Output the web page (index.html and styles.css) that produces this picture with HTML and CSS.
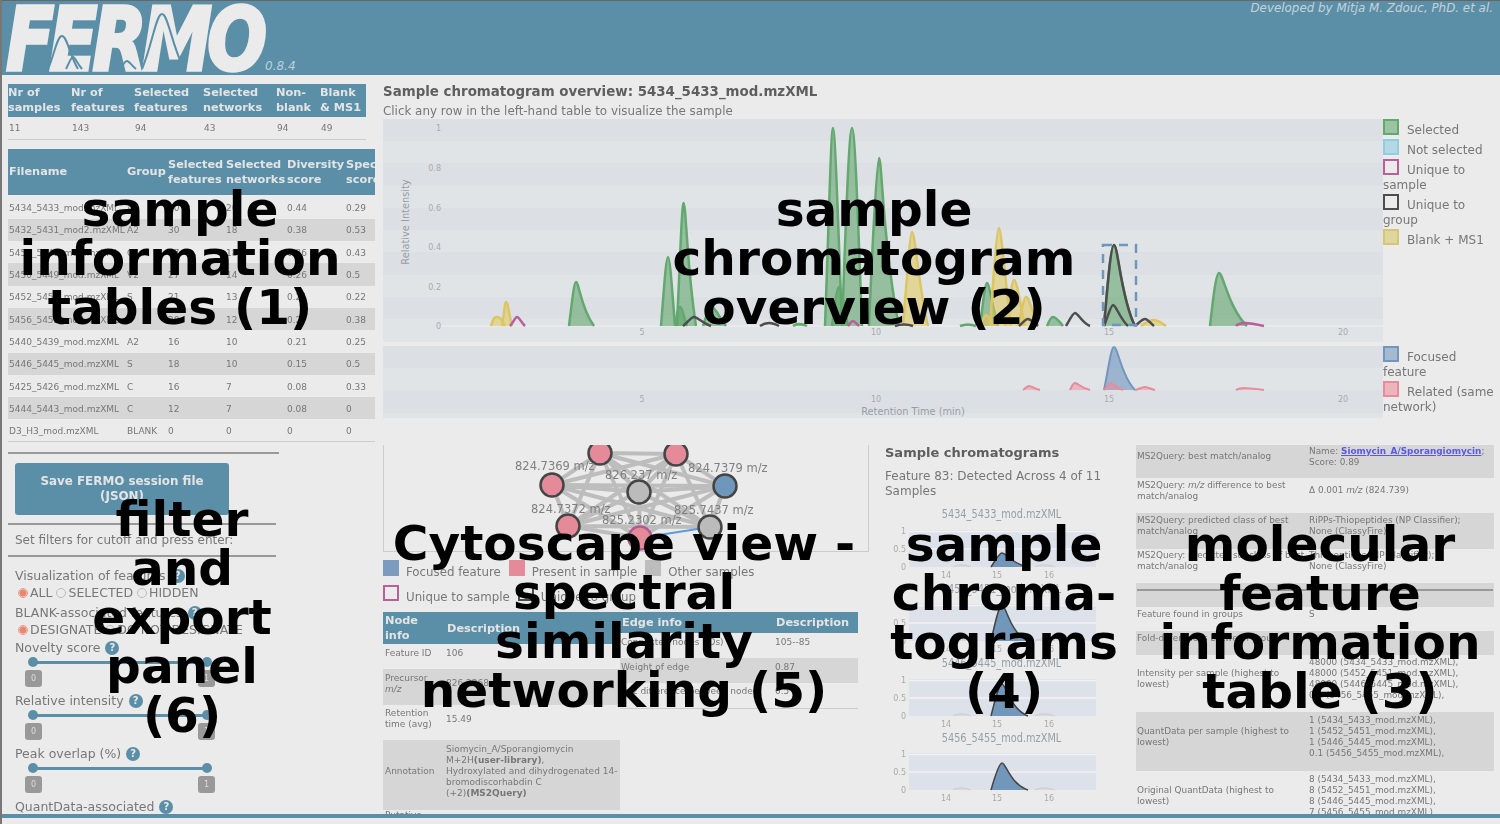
FILE: index.html
```html
<!DOCTYPE html>
<html lang="en">
<head>
  <meta charset="UTF-8">
  <meta name="viewport" content="width=device-width, initial-scale=1.0">
  <title>FERMO dashboard</title>
  <link rel="stylesheet" href="styles.css">
</head>
<body>
  <div class="page">
    <header class="header">
      <div class="logo">
        <span class="logo-text">FERMO</span>
        <svg class="logo-peaks" width="190" height="70" viewBox="0 0 190 70">
          <path d="M46 68C52 55 55 35 60 35C65 35 68 55 76 68"/>
          <path d="M64 68C67 62 69 56 71 56C73 56 75 62 80 68"/>
          <path d="M118 68C121 64 123 60 125 60C127 60 129 64 134 68"/>
          <path d="M140 68C150 45 154 13 160 13C166 13 170 45 182 68"/>
        </svg>
        <span class="version">0.8.4</span>
      </div>
      <div class="credit">Developed by Mitja M. Zdouc, PhD. et al.</div>
    </header>

    <div class="main">
      <aside class="left">
        <table class="tbl tbl-stats">
          <thead>
            <tr><th class="c1">Nr of samples</th><th class="c2">Nr of features</th><th class="c3">Selected features</th><th class="c4">Selected networks</th><th class="c5">Non-blank</th><th class="c6">Blank &amp; MS1</th></tr>
          </thead>
          <tbody>
            <tr><td>11</td><td>143</td><td>94</td><td>43</td><td>94</td><td>49</td></tr>
          </tbody>
        </table>

        <div class="samples-wrap">
          <table class="tbl tbl-samples">
            <thead>
              <tr><th class="s1">Filename</th><th class="s2">Group</th><th class="s3">Selected features</th><th class="s4">Selected networks</th><th class="s5">Diversity score</th><th class="s6">Specificity score</th></tr>
            </thead>
            <tbody>
              <tr><td>5434_5433_mod.mzXML</td><td>A2</td><td>30</td><td>20</td><td>0.44</td><td>0.29</td></tr>
              <tr><td>5432_5431_mod2.mzXML</td><td>A2</td><td>30</td><td>18</td><td>0.38</td><td>0.53</td></tr>
              <tr><td>5450_5449_mod.mzXML</td><td>C</td><td>27</td><td>18</td><td>0.36</td><td>0.43</td></tr>
              <tr><td>5450_5449_mod.mzXML</td><td>V2</td><td>27</td><td>14</td><td>0.26</td><td>0.5</td></tr>
              <tr><td>5452_5451_mod.mzXML</td><td>S</td><td>21</td><td>13</td><td>0.21</td><td>0.22</td></tr>
              <tr><td>5456_5455_mod.mzXML</td><td>S</td><td>20</td><td>12</td><td>0.27</td><td>0.38</td></tr>
              <tr><td>5440_5439_mod.mzXML</td><td>A2</td><td>16</td><td>10</td><td>0.21</td><td>0.25</td></tr>
              <tr><td>5446_5445_mod.mzXML</td><td>S</td><td>18</td><td>10</td><td>0.15</td><td>0.5</td></tr>
              <tr><td>5425_5426_mod.mzXML</td><td>C</td><td>16</td><td>7</td><td>0.08</td><td>0.33</td></tr>
              <tr><td>5444_5443_mod.mzXML</td><td>C</td><td>12</td><td>7</td><td>0.08</td><td>0</td></tr>
              <tr><td>D3_H3_mod.mzXML</td><td>BLANK</td><td>0</td><td>0</td><td>0</td><td>0</td></tr>
            </tbody>
          </table>
        </div>

        <div class="rule rule-first"></div>
        <button class="save-btn">Save FERMO session file (JSON)</button>
        <div class="rule rule-second"></div>
        <p class="filter-intro">Set filters for cutoff and press enter:</p>
        <div class="rule rule-second"></div>

        <div class="filters">
          <div class="flabel flabel-first">Visualization of features <span class="help">?</span></div>
          <div class="radios">
            <span class="radio on"></span>ALL <span class="radio"></span>SELECTED <span class="radio"></span>HIDDEN
          </div>
          <div class="flabel">BLANK-associated features <span class="help">?</span></div>
          <div class="radios">
            <span class="radio on"></span>DESIGNATE <span class="radio"></span>DO NOT DESIGNATE
          </div>
          <div class="flabel flabel-tight">Novelty score <span class="help">?</span></div>
          <div class="slider"><div class="track"></div><div class="vals"><span>0</span><span>1</span></div></div>
          <div class="flabel flabel-tight">Relative intensity <span class="help">?</span></div>
          <div class="slider"><div class="track"></div><div class="vals"><span>0</span><span>1</span></div></div>
          <div class="flabel flabel-tight">Peak overlap (%) <span class="help">?</span></div>
          <div class="slider"><div class="track"></div><div class="vals"><span>0</span><span>1</span></div></div>
          <div class="flabel flabel-tight">QuantData-associated <span class="help">?</span></div>
        </div>
      </aside>

      <section class="right">
        <div class="overview">
          <h2 class="ov-title">Sample chromatogram overview: 5434_5433_mod.mzXML</h2>
          <p class="ov-sub">Click any row in the left-hand table to visualize the sample</p>
          <div class="ov-row ov-row-main">
            <svg class="plot" width="1000" height="223" viewBox="0 0 1000 223">
              <rect width="1000" height="223" fill="#dce0e4"/>
              <g fill="#e0e4e7">
                <rect y="22" width="1000" height="22"/><rect y="67" width="1000" height="22"/><rect y="111" width="1000" height="22"/><rect y="156" width="1000" height="22"/><rect y="200" width="1000" height="23"/>
              </g>
              <line x1="57" y1="207" x2="1000" y2="207" stroke="#eef0f1" stroke-width="1"/>
              <g class="peaks-green">
                <path d="M186 207C189 183 191 163 193 163C196 163 198 190 211 207"/>
                <path d="M278 207C281 170 283 138 285 138C287 138 289 170 292 207"/>
                <path d="M294 207C297 140 299 84 300.5 84C303 84 304 150 313 207"/>
                <path d="M292 207C294 195 295 188 297 188C299 188 301 198 304 207"/>
                <path d="M320 207C324 195 326 188 329 188C332 188 336 198 343 207"/>
                <path d="M410 207C414 204 418 204 424 207"/>
                <path d="M442 207C446 100 448 9 450 9C452 9 455 100 459 207"/>
                <path d="M449 207C452 185 454 168 456 168C458 168 461 185 465 207"/>
                <path d="M459 207C463 100 466 9 469 9C472 9 475 100 479 207"/>
                <path d="M486 207C490 110 494 39 496 39C499 39 500 130 516 207"/>
                <path d="M577 207C582 205 588 205 593 207"/>
                <path d="M597 207C600 185 602 164 604 164C606 164 609 185 615 207"/>
                <path d="M664 207C666 202 668 198 670 198C673 198 676 202 680 207"/>
                <path d="M721 207C725 160 728 126 731 126C735 126 738 180 752 207"/>
                <path d="M827 207C830 180 833 154 836 154C840 154 846 190 864 207"/>
              </g>
              <g class="peaks-yellow">
                <path d="M108 207C110 200 111 198 114 198C117 198 119 200 122 207"/>
                <path d="M119 207C121 195 122 183 123 183C125 183 126 195 129 207"/>
                <path d="M520 207C524 160 527 113 529 113C532 113 536 170 545 207"/>
                <path d="M598 207C600 200 602 196 603 196C605 196 607 200 610 207"/>
                <path d="M607 207C611 150 614 109 616 109C618 109 622 160 628 207"/>
                <path d="M622 207C626 185 629 161 631 161C634 161 637 185 642 207"/>
                <path d="M635 207C638 195 641 178 643 178C646 178 650 195 655 207"/>
                <path d="M758 207C762 204 767 201 771 201C775 201 779 204 783 207"/>
              </g>
              <g class="peaks-pink">
                <path d="M127 207C131 203 132 198 134 198C136 198 138 203 142 207"/>
                <path d="M465 207C467 205 468 202 470 202C472 202 473 205 476 207"/>
                <path d="M853 207C856 203 864 203 881 207"/>
              </g>
              <g class="peaks-dark">
                <path d="M300 207C305 203 308 198 311 198C314 198 320 204 328 207"/>
                <path d="M377 207C380 205 382 204 386 204C390 204 392 205 396 207"/>
                <path d="M636 207C640 204 642 200 645 200C648 200 650 204 655 207"/>
                <path d="M683 207C687 200 690 194 692 194C695 194 699 204 707 207"/>
                <path d="M721 207C725 197 728 186 730 186C733 186 737 200 745 207"/>
                <path d="M721 207C725 160 728 126 731 126C735 126 738 180 752 207"/>
                <path d="M752 207C756 204 759 200 762 200C765 200 767 204 771 207"/>
                <path d="M512 207C518 205 524 205 530 207"/>
              </g>
              <rect class="focus-box" x="720" y="126" width="33" height="80"/>
              <g class="axis">
                <text x="58" y="12" text-anchor="end">1</text>
                <text x="58" y="52" text-anchor="end">0.8</text>
                <text x="58" y="92" text-anchor="end">0.6</text>
                <text x="58" y="131" text-anchor="end">0.4</text>
                <text x="58" y="171" text-anchor="end">0.2</text>
                <text x="58" y="210" text-anchor="end">0</text>
                <text x="259" y="216" text-anchor="middle">5</text>
                <text x="493" y="216" text-anchor="middle">10</text>
                <text x="726" y="216" text-anchor="middle">15</text>
                <text x="960" y="216" text-anchor="middle">20</text>
                <text class="axis-title" transform="translate(26 103) rotate(-90)" text-anchor="middle">Relative Intensity</text>
              </g>
            </svg>
            <ul class="legend">
              <li><span class="swatch sw-green"></span>Selected</li>
              <li><span class="swatch sw-sky"></span>Not selected</li>
              <li><span class="swatch sw-pink"></span>Unique to sample</li>
              <li><span class="swatch sw-dark"></span>Unique to group</li>
              <li><span class="swatch sw-yellow"></span>Blank + MS1</li>
            </ul>
          </div>
          <div class="ov-row ov-row-focus">
            <svg class="plot" width="1000" height="72" viewBox="0 0 1000 72">
              <rect width="1000" height="72" fill="#dce0e4"/>
              <g fill="#e0e4e7"><rect y="22" width="1000" height="22"/><rect y="67" width="1000" height="5"/></g>
              <path class="peak-focus" d="M721 44C725 25 728 1 731 1C735 1 738 30 752 44"/>
              <g class="peaks-related">
                <path d="M640 44C643 42 644 40 646 40C649 40 651 43 657 44"/>
                <path d="M687 44C689 40 690 37 692 37C695 37 698 42 707 44"/>
                <path d="M721 44C724 42 725 37 727 37C730 37 733 42 740 44"/>
                <path d="M752 44C756 43 759 41 762 41C765 41 768 43 772 44"/>
                <path d="M853 44C858 41 866 42 881 44"/>
              </g>
              <g class="axis">
                <text x="259" y="56" text-anchor="middle">5</text>
                <text x="493" y="56" text-anchor="middle">10</text>
                <text x="726" y="56" text-anchor="middle">15</text>
                <text x="960" y="56" text-anchor="middle">20</text>
                <text class="axis-title" x="530" y="69" text-anchor="middle">Retention Time (min)</text>
              </g>
            </svg>
            <ul class="legend">
              <li><span class="swatch sw-focus"></span>Focused feature</li>
              <li><span class="swatch sw-related"></span>Related (same network)</li>
            </ul>
          </div>
        </div>

        <div class="lower">
          <div class="network">
            <div class="cyto">
              <svg width="483" height="106" viewBox="384 446 483 106">
                <g class="edges">
                  <path d="M600 454L676 455M600 454L552 486M600 454L725 487M600 454L639 493M600 454L568 527M600 454L710 528M600 454L640 539"/>
                  <path d="M676 455L552 486M676 455L725 487M676 455L639 493M676 455L568 527M676 455L710 528M676 455L640 539"/>
                  <path d="M552 486L725 487M552 486L639 493M552 486L568 527M552 486L710 528M552 486L640 539"/>
                  <path d="M725 487L639 493M725 487L568 527M725 487L710 528M725 487L640 539"/>
                  <path d="M639 493L568 527M639 493L710 528M639 493L640 539M568 527L710 528M568 527L640 539"/>
                </g>
                <path d="M640 539L710 528" stroke="#5a9be0" stroke-width="2"/>
                <g class="node"><circle class="n-pink" cx="600" cy="454" r="11.5"/><circle class="n-pink" cx="676" cy="455" r="11.5"/><circle class="n-pink" cx="552" cy="486" r="11.5"/><circle class="n-blue" cx="725" cy="487" r="11.5"/><circle class="n-gray" cx="639" cy="493" r="11.5"/><circle class="n-pink" cx="568" cy="527" r="11.5"/><circle class="n-gray" cx="710" cy="528" r="11.5"/><circle class="n-uniq" cx="640" cy="539" r="11.5"/></g>
                <g class="node-labels">
                  <text x="515" y="471">824.7369 m/z</text>
                  <text x="605" y="480">826.237 m/z</text>
                  <text x="688" y="473">824.7379 m/z</text>
                  <text x="531" y="514">824.7372 m/z</text>
                  <text x="674" y="515">825.7437 m/z</text>
                  <text x="602" y="525">825.2302 m/z</text>
                </g>
              </svg>
            </div>
            <div class="net-legend">
              <span class="net-item"><span class="swatch sw-solid-blue"></span>Focused feature</span>
              <span class="net-item"><span class="swatch sw-solid-pink"></span>Present in sample</span>
              <span class="net-item"><span class="swatch sw-solid-gray"></span>Other samples</span>
              <span class="net-item"><span class="swatch sw-pink"></span>Unique to sample</span>
              <span class="net-item"><span class="swatch sw-dark"></span>Unique to group</span>
            </div>
            <div class="net-tables">
              <table class="tbl tbl-node">
                <thead><tr><th class="n1">Node<br>info</th><th>Description</th></tr></thead>
                <tbody>
                  <tr class="r-id"><td>Feature ID</td><td>106</td></tr>
                  <tr class="r-prec"><td>Precursor <i>m/z</i></td><td>826.2368</td></tr>
                  <tr class="r-rt"><td>Retention time (avg)</td><td>15.49</td></tr>
                  <tr class="r-ann"><td>Annotation</td><td>Siomycin_A/Sporangiomycin<br>M+2H<b>(user-library)</b>,<br>Hydroxylated and dihydrogenated 14-<br>bromodiscorhabdin C<br>(+2)<b>(MS2Query)</b></td></tr>
                  <tr><td>Putative adducts</td><td>Non-MS2 fragment of node</td></tr>
                </tbody>
              </table>
              <table class="tbl tbl-edge">
                <thead><tr><th class="e1">Edge info</th><th>Description</th></tr></thead>
                <tbody>
                  <tr><td>Connected nodes (IDs)</td><td>105--85</td></tr>
                  <tr class="r-weight"><td>Weight of edge</td><td>0.87</td></tr>
                  <tr><td>m/z difference between nodes</td><td>0.5</td></tr>
                </tbody>
              </table>
            </div>
          </div>

          <div class="sample-charts">
            <h3 class="sc-title">Sample chromatograms</h3>
            <p class="sc-sub">Feature 83: Detected Across 4 of 11 Samples</p>
            <div class="mini">
              <div class="mini-title">5434_5433_mod.mzXML</div>
              <svg width="268" height="58" viewBox="0 0 268 58">
                <rect class="mini-bg" x="40" y="7" width="187" height="37"/>
                <path class="mini-grid" d="M40 8.5H227M40 26H227"/>
                <path class="mini-bump" d="M84 44C88 41 96 41 102 44M166 44C170 41 178 41 186 44"/>
                <path class="mini-peak" d="M122 44C126 38 130 30 133 30C137 30 141 40 159 44"/>
                <g class="axis"><text x="37" y="11" text-anchor="end">1</text><text x="37" y="29" text-anchor="end">0.5</text><text x="37" y="47" text-anchor="end">0</text><text x="77" y="55" text-anchor="middle">14</text><text x="128" y="55" text-anchor="middle">15</text><text x="180" y="55" text-anchor="middle">16</text></g>
              </svg>
            </div>
            <div class="mini">
              <div class="mini-title">5452_5451_mod.mzXML</div>
              <svg width="268" height="58" viewBox="0 0 268 58">
                <rect class="mini-bg" x="40" y="7" width="187" height="37"/>
                <path class="mini-grid" d="M40 8.5H227M40 26H227"/>
                <path class="mini-bump" d="M84 44C88 41 96 41 102 44M166 44C170 41 178 41 186 44"/>
                <path class="mini-peak" d="M122 44C126 26 130 8 133 8C137 8 141 36 159 44"/>
                <g class="axis"><text x="37" y="11" text-anchor="end">1</text><text x="37" y="29" text-anchor="end">0.5</text><text x="37" y="47" text-anchor="end">0</text><text x="77" y="55" text-anchor="middle">14</text><text x="128" y="55" text-anchor="middle">15</text><text x="180" y="55" text-anchor="middle">16</text></g>
              </svg>
            </div>
            <div class="mini">
              <div class="mini-title">5446_5445_mod.mzXML</div>
              <svg width="268" height="58" viewBox="0 0 268 58">
                <rect class="mini-bg" x="40" y="7" width="187" height="37"/>
                <path class="mini-grid" d="M40 8.5H227M40 26H227"/>
                <path class="mini-bump" d="M84 44C88 41 96 41 102 44M166 44C170 41 178 41 186 44"/>
                <path class="mini-peak" d="M122 44C126 28 130 12 133 12C137 12 141 37 159 44"/>
                <g class="axis"><text x="37" y="11" text-anchor="end">1</text><text x="37" y="29" text-anchor="end">0.5</text><text x="37" y="47" text-anchor="end">0</text><text x="77" y="55" text-anchor="middle">14</text><text x="128" y="55" text-anchor="middle">15</text><text x="180" y="55" text-anchor="middle">16</text></g>
              </svg>
            </div>
            <div class="mini">
              <div class="mini-title">5456_5455_mod.mzXML</div>
              <svg width="268" height="58" viewBox="0 0 268 58">
                <rect class="mini-bg" x="40" y="7" width="187" height="37"/>
                <path class="mini-grid" d="M40 8.5H227M40 26H227"/>
                <path class="mini-bump" d="M84 44C88 41 96 41 102 44M166 44C170 41 178 41 186 44"/>
                <path class="mini-peak" d="M122 44C126 30 130 17 133 17C137 17 141 38 159 44"/>
                <g class="axis"><text x="37" y="11" text-anchor="end">1</text><text x="37" y="29" text-anchor="end">0.5</text><text x="37" y="47" text-anchor="end">0</text><text x="77" y="55" text-anchor="middle">14</text><text x="128" y="55" text-anchor="middle">15</text><text x="180" y="55" text-anchor="middle">16</text></g>
              </svg>
            </div>
          </div>

          <div class="feature-info">
            <table class="tbl tbl-feature">
              <tbody>
                <tr class="h33"><td>MS2Query: best match/analog</td><td>Name: <a href="#">Siomycin_A/Sporangiomycin</a>;<br>Score: 0.89</td></tr>
                <tr class="h35"><td>MS2Query: <i>m/z</i> difference to best match/analog</td><td>Δ 0.001 <i>m/z</i> (824.739)</td></tr>
                <tr class="h36"><td>MS2Query: predicted class of best match/analog</td><td>RiPPs-Thiopeptides (NP Classifier);<br>None (ClassyFire)</td></tr>
                <tr class="h34"><td>MS2Query: predicted subclass of best match/analog</td><td>Thiopeptides (NP Classifier);<br>None (ClassyFire)</td></tr>
                <tr class="h24"><td colspan="2"><div class="cell-rule"></div></td></tr>
                <tr class="h24"><td>Feature found in groups</td><td>S</td></tr>
                <tr class="h24"><td>Fold-differences between groups</td><td>1</td></tr>
                <tr class="h57"><td>Intensity per sample (highest to lowest)</td><td>48000 (5434_5433_mod.mzXML),<br>48000 (5452_5451_mod.mzXML),<br>48000 (5446_5445_mod.mzXML),<br>0.1 (5456_5455_mod.mzXML),</td></tr>
                <tr class="h59"><td>QuantData per sample (highest to lowest)</td><td>1 (5434_5433_mod.mzXML),<br>1 (5452_5451_mod.mzXML),<br>1 (5446_5445_mod.mzXML),<br>0.1 (5456_5455_mod.mzXML),</td></tr>
                <tr class="h59"><td>Original QuantData (highest to lowest)</td><td>8 (5434_5433_mod.mzXML),<br>8 (5452_5451_mod.mzXML),<br>8 (5446_5445_mod.mzXML),<br>7 (5456_5455_mod.mzXML)</td></tr>
              </tbody>
            </table>
          </div>
        </div>
      </section>
    </div>
    <div class="bottom-bar"></div>
  </div>

  <div class="callout co-tables">sample<br>information<br>tables (1)</div>
  <div class="callout co-overview">sample<br>chromatogram<br>overview (2)</div>
  <div class="callout co-filter">filter<br>and<br>export<br>panel<br>(6)</div>
  <div class="callout co-network">Cytoscape view -<br>spectral<br>similarity<br>networking (5)</div>
  <div class="callout co-samples">sample<br>chroma-<br>tograms<br>(4)</div>
  <div class="callout co-feature">molecular<br>feature<br>information<br>table (3)</div>
</body>
</html>
```

FILE: styles.css
```css
html, body {
  margin: 0;
  padding: 0;
  height: 824px;
  overflow: hidden;
  background: #ebebeb;
  font-family: 'DejaVu Sans', sans-serif;
  color: #777;
}
.page {
  height: 824px;
  border-left: 2px solid #777;
  box-sizing: border-box;
  filter: blur(0.45px);
}

/* header */
.header {
  height: 75px;
  box-sizing: border-box;
  background: #5b8fa8;
  border-top: 1px solid #666;
  display: flex;
  justify-content: space-between;
  overflow: hidden;
}
.logo {
  position: relative;
  width: 320px;
}
.logo-text {
  position: absolute;
  left: 4px;
  top: -7px;
  font: italic bold 88px/92px 'DejaVu Sans', sans-serif;
  color: #ebebeb;
  -webkit-text-stroke: 3.5px #ebebeb;
  letter-spacing: -6px;
  transform: scaleX(0.8);
  transform-origin: left top;
}
.logo-peaks {
  position: absolute;
  left: 0;
  top: 0;
}
.logo-peaks path {
  fill: none;
  stroke: #5b8fa8;
  stroke-width: 2;
}
.version {
  position: absolute;
  left: 263px;
  top: 58px;
  font-size: 12px;
  font-style: italic;
  color: #bccfda;
}
.credit {
  font-size: 11.9px;
  font-style: italic;
  color: #c3d3dc;
  padding: 0 7px 0 0;
  line-height: 14px;
}

/* layout */
.main {
  display: grid;
  grid-template-columns: 381px 1fr;
  height: 739px;
  overflow: hidden;
}
.left {
  padding: 9px 0 0 6px;
  overflow: hidden;
}
.right {
  overflow: hidden;
}
.bottom-bar {
  height: 4px;
  background: #5b8fa8;
}

/* tables */
.tbl {
  border-collapse: collapse;
  table-layout: fixed;
  font-size: 9px;
}
.tbl th {
  background: #5b8fa8;
  color: #e4e4e4;
  font-weight: bold;
  font-size: 11.3px;
  line-height: 15px;
  text-align: left;
  padding: 0 1px;
}
.tbl td {
  padding: 0 1px;
  line-height: 11px;
}
.tbl-stats {
  width: 358px;
  border-bottom: 1px solid #ccc;
}
.tbl-stats th {
  padding: 0 0 2px 0;
}
.tbl-stats td {
  padding: 2px 0 0 1px;
}
.tbl-stats thead tr { height: 33px; }
.tbl-stats tbody tr { height: 22px; }
.c1 { width: 63px; }
.c2 { width: 63px; }
.c3 { width: 69px; }
.c4 { width: 73px; }
.c5 { width: 44px; }
.samples-wrap {
  width: 367px;
  margin-top: 9px;
  overflow: hidden;
}
.tbl-samples {
  width: 395px;
  border-bottom: 1px solid #ccc;
}
.tbl-samples thead tr { height: 46px; }
.tbl-samples tbody tr { height: 22.3px; }
.tbl-samples tbody tr:nth-child(even) { background: #d6d6d6; }
.tbl-samples tbody::before {
  content: "";
  display: block;
  height: 2px;
}
.tbl-samples td {
  padding-top: 2px;
}
.s1 { width: 116px; }
.s2 { width: 39px; }
.s3 { width: 56px; }
.s4 { width: 59px; }
.s5 { width: 57px; }

/* filter panel */
.rule {
  height: 2px;
  background: #999;
}
.rule-first {
  width: 271px;
  margin-top: 10px;
}
.rule-second {
  width: 268px;
}
.save-btn {
  display: block;
  width: 214px;
  height: 52px;
  margin: 9px 0 8px 7px;
  background: #5b8fa8;
  color: #e4e4e4;
  border: none;
  border-radius: 3px;
  font-family: 'DejaVu Sans', sans-serif;
  font-weight: bold;
  font-size: 11.9px;
  line-height: 15px;
  padding: 0 10px;
}
.filter-intro {
  margin: 0;
  padding-left: 7px;
  height: 30px;
  line-height: 30px;
  font-size: 12px;
}
.filters {
  padding-left: 7px;
  font-size: 12.5px;
}
.flabel {
  height: 17px;
  line-height: 17px;
  margin-top: 2px;
  white-space: nowrap;
}
.flabel-first {
  margin-top: 10px;
}
.flabel-tight {
  margin-top: 0;
}
.help {
  display: inline-block;
  width: 14px;
  height: 14px;
  border-radius: 50%;
  background: #5b8fa8;
  color: #e8e8e8;
  font-size: 10px;
  font-weight: bold;
  line-height: 14px;
  text-align: center;
  margin-left: 1px;
  vertical-align: 1px;
}
.radios {
  height: 18px;
  line-height: 18px;
  padding-left: 3px;
  white-space: nowrap;
}
.radio {
  display: inline-block;
  box-sizing: border-box;
  width: 10px;
  height: 10px;
  border-radius: 50%;
  border: 1px solid #bbb;
  margin-right: 2px;
  vertical-align: -1px;
}
.radio.on {
  border: 1px solid #ec9a86;
  background: radial-gradient(circle, #e8866f 0 3.2px, #f3d3c9 3.8px);
}
.slider {
  width: 200px;
  margin-bottom: 5px;
}
.track {
  position: relative;
  height: 3px;
  margin: 5px 8px 0 18px;
  background: #5b8fa8;
}
.track::before,
.track::after {
  content: "";
  position: absolute;
  top: -4px;
  width: 10px;
  height: 10px;
  border-radius: 50%;
  background: #5b8fa8;
}
.track::before { left: -5px; }
.track::after { right: -5px; }
.vals {
  display: flex;
  justify-content: space-between;
  margin: 6px 0 0 10px;
}
.vals span {
  width: 17px;
  height: 17px;
  background: #999;
  border-radius: 3px;
  color: #ddd;
  font-size: 8px;
  line-height: 17px;
  text-align: center;
}

/* overview charts */
.overview {
  height: 370px;
  overflow: hidden;
}
.ov-title {
  margin: 0;
  padding-top: 9px;
  font-size: 13.4px;
  line-height: 16px;
  color: #5e5e5e;
}
.ov-sub {
  margin: 0;
  box-sizing: border-box;
  padding-top: 3px;
  font-size: 11.9px;
  line-height: 16px;
  height: 19px;
}
.ov-row {
  display: flex;
}
.ov-row-focus {
  margin-top: 4px;
}
.plot {
  display: block;
  flex: none;
}
.legend {
  list-style: none;
  margin: 0;
  padding: 3.5px 0 0;
  width: 117px;
  font-size: 12px;
  line-height: 15px;
}
.legend li {
  margin-bottom: 5px;
}
.legend .swatch {
  vertical-align: top;
  margin-top: -4px;
}
.swatch {
  display: inline-block;
  box-sizing: border-box;
  width: 16px;
  height: 16px;
  margin-right: 8px;
  vertical-align: 1px;
}
.sw-green { background: #9cc3a2; border: 2px solid #62a86f; }
.sw-sky { background: #b5d8e4; border: 2px solid #8fcde2; }
.sw-pink { border: 2px solid #b9609a; }
.sw-dark { border: 2px solid #4d4d4d; }
.sw-yellow { background: #ddd5a2; border: 2px solid #d9c76f; }
.sw-focus { background: #a6bacf; border: 2px solid #7296bd; }
.sw-related { background: #ecb4bd; border: 2px solid #e88b9b; }
.sw-solid-blue { background: #7c9cbf; }
.sw-solid-pink { background: #e58a98; }
.sw-solid-gray { background: #bdbdbd; }
.peaks-green path { fill: rgba(90, 160, 100, 0.55); stroke: #62a86f; stroke-width: 2.5; }
.peaks-yellow path { fill: rgba(225, 200, 90, 0.55); stroke: #dcc565; stroke-width: 2.5; }
.peaks-pink path { fill: none; stroke: #b9609a; stroke-width: 2.5; }
.peaks-dark path { fill: none; stroke: #4d4d4d; stroke-width: 2.5; }
.peak-focus { fill: rgba(100, 140, 185, 0.55); stroke: #7296bd; stroke-width: 2; }
.peaks-related path { fill: rgba(232, 139, 155, 0.5); stroke: #e88b9b; stroke-width: 2; }
.focus-box {
  fill: none;
  stroke: #6f97bb;
  stroke-width: 2.5;
  stroke-dasharray: 9 7;
}
.axis text {
  font-size: 8px;
  fill: #aaa;
}
.axis .axis-title {
  font-size: 9.8px;
  fill: #989da5;
}

/* lower row */
.lower {
  display: grid;
  grid-template-columns: 486px 267px 358px;
  height: 369px;
  overflow: hidden;
}
.network {
  overflow: hidden;
}
.cyto {
  height: 106px;
  width: 484px;
  border: 1px solid #ccc;
  border-top: none;
  overflow: hidden;
}
.cyto svg {
  display: block;
}
.edges path {
  fill: none;
  stroke: #bdbdbd;
  stroke-width: 4;
}
.node circle {
  stroke: #454545;
  stroke-width: 2.5;
}
.n-pink { fill: #e58a98; }
.n-blue { fill: #6f97bb; }
.n-gray { fill: #bbb; }
.node .n-uniq { fill: #e58a98; stroke: #b05a92; }
.node-labels text {
  font-size: 11.5px;
  fill: #808080;
}
.net-legend {
  display: flex;
  flex-wrap: wrap;
  width: 420px;
  column-gap: 8px;
  row-gap: 5px;
  margin-top: 8px;
  font-size: 11.8px;
  line-height: 16px;
}
.net-item .swatch {
  margin-right: 7px;
  vertical-align: 0;
}
.net-tables {
  display: flex;
  align-items: flex-start;
  margin-top: 7px;
}
.tbl-node {
  width: 237px;
  flex: none;
}
.tbl-node th { height: 32px; padding-left: 2px; }
.tbl-node td,
.tbl-edge td {
  padding-bottom: 7px;
}
.n1 { width: 59px; }
.tbl-node td:first-child { padding-left: 2px; }
.r-id { height: 25px; }
.r-prec { height: 36px; background: #d6d6d6; }
.r-rt { height: 35px; }
.r-ann { height: 70px; background: #d6d6d6; }
.tbl-edge {
  width: 238px;
  flex: none;
  border-bottom: 1px solid #ccc;
}
.tbl-edge th { height: 21px; padding-left: 2px; }
.e1 { width: 151px; }
.tbl-edge tbody tr { height: 25px; }
.tbl-edge .r-weight { background: #d6d6d6; }

/* sample chromatograms */
.sample-charts {
  overflow: hidden;
}
.sc-title {
  margin: 0;
  padding: 0 0 0 16px;
  font-size: 13px;
  line-height: 16px;
  color: #5e5e5e;
}
.sc-sub {
  margin: 8px 0 7px;
  padding: 0 16px;
  font-size: 12px;
  line-height: 15px;
}
.mini {
  height: 74.5px;
}
.mini-title {
  height: 16.5px;
  line-height: 16px;
  font-size: 11.5px;
  text-align: center;
  color: #989da5;
  margin-right: 2px;
  transform: scaleX(0.85);
}
.mini svg {
  display: block;
}
.mini-bg { fill: #dde2ea; }
.mini-grid { fill: none; stroke: #f1f2f4; stroke-width: 1.5; }
.mini-bump { fill: #d8d8da; stroke: #cfcfd2; }
.mini-peak { fill: #7197bb; stroke: #444; stroke-width: 1.5; }

/* feature table */
.tbl-feature {
  width: 358px;
  font-size: 8.9px;
}
.tbl-feature td {
  padding: 0 1px 10px;
  vertical-align: middle;
  line-height: 11px;
}
.tbl-feature td:first-child {
  width: 170px;
}
.tbl-feature tr:nth-child(odd) { background: #d6d6d6; }
.tbl-feature a {
  color: #5a5ae0;
  font-weight: bold;
}
.h24 { height: 24px; }
.h33 { height: 33px; }
.h34 { height: 34px; }
.h35 { height: 35px; }
.h36 { height: 36px; }
.h57 { height: 57px; }
.h59 { height: 59px; }
.cell-rule {
  height: 2px;
  background: #999;
}

/* big black labels lying over the page */
.callout {
  position: absolute;
  transform: translateX(-50%);
  font-family: 'DejaVu Sans', sans-serif;
  font-weight: bold;
  font-size: 48.6px;
  line-height: 49px;
  color: #000;
  text-align: center;
  white-space: nowrap;
}
.co-tables { left: 180px; top: 185px; }
.co-overview { left: 874px; top: 185px; }
.co-filter { left: 182px; top: 495px; }
.co-network { left: 624px; top: 519px; }
.co-samples { left: 1004px; top: 520px; }
.co-feature { left: 1320px; top: 520px; }
```
